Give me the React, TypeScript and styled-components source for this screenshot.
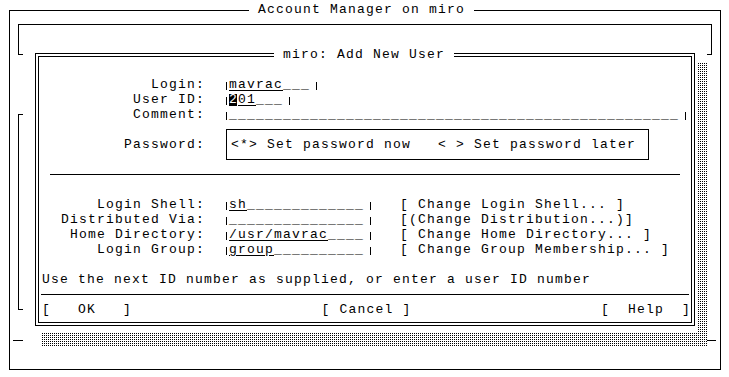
import React, { ReactElement } from "react";
import styled, { createGlobalStyle, css } from "styled-components";

const GlobalStyle = createGlobalStyle`
  html, body {
    margin: 0;
    padding: 0;
    background: #fff;
  }
  body {
    font-family: "Liberation Mono", "DejaVu Sans Mono", monospace;
    font-size: 13px;
    line-height: 15px;
    letter-spacing: 1.2px;
    color: #000;
  }
`;

const shade = css`
  background-color: #fff;
  background-image: linear-gradient(90deg, #fff 1px, transparent 1px),
    linear-gradient(#fff 1px, #000 1px);
  background-size: 2px 2px;
`;

const Screen = styled.div`
  position: relative;
  box-sizing: border-box;
  width: 729px;
  height: 377px;
  padding: 10px 0 0 9px;
  overflow: hidden;
`;

const Window = styled.div`
  box-sizing: border-box;
  width: 712px;
  height: 360px;
  border: 1px solid #000;
`;

const Caption = styled.div<{ $top: number; $left: number }>`
  width: fit-content;
  height: 15px;
  margin: ${p => p.$top}px 0 0 ${p => p.$left}px;
  background: #fff;
  white-space: pre;
`;

const HeaderPanel = styled.div`
  box-sizing: border-box;
  width: 694px;
  height: 31px;
  margin: 7px 0 0 8px;
  border: 1px solid #000;
`;

const ListPanel = styled.div`
  box-sizing: border-box;
  width: 600px;
  height: 196px;
  margin: 59px 0 0 8px;
  border: 1px solid #000;
`;

const StatusRule = styled.div`
  width: 703px;
  height: 1px;
  margin: 30px 0 0 3px;
  background: #000;
`;

const Modal = styled.div`
  position: absolute;
  left: 23px;
  top: 48px;
  box-sizing: border-box;
  width: 684px;
  height: 300px;
  padding: 5px 0 0 12px;
  background: #fff;
  display: grid;
  grid-template-columns: 660px 3px 9px;
  grid-template-rows: 273px 6px 15px;
`;

const Dialog = styled.div`
  grid-column: 1;
  grid-row: 1;
  box-sizing: border-box;
  border: 1px solid #000;
  padding: 2px;
`;

const DialogBody = styled.div`
  box-sizing: border-box;
  height: 100%;
  border: 1px solid #000;
  display: flex;
  flex-direction: column;
`;

const RightShadow = styled.div`
  ${shade}
  grid-column: 3;
  grid-row: 1 / 4;
  margin-top: 9px;
  background-position: 1px 0;
`;

const BottomShadow = styled.div`
  ${shade}
  grid-column: 1 / 3;
  grid-row: 3;
  margin-left: 6px;
`;

const FormBlock = styled.div<{ $top: number }>`
  margin-top: ${p => p.$top}px;
`;

const Row = styled.div`
  display: flex;
  height: 15px;
  white-space: pre;
`;

const Label = styled.span`
  width: 166px;
  flex: none;
  text-align: right;
`;

const FieldCell = styled.span`
  padding-left: 15px;
`;

const Bar = styled.span`
  display: inline-block;
  width: 0;
  height: 8px;
  margin: 0 2px 0 6px;
  border-left: 1px solid #000;
  vertical-align: -2px;
`;

const Value = styled.span`
  text-decoration: underline;
  text-underline-offset: 2px;
`;

const Cursor = styled.span`
  display: inline-block;
  width: 8px;
  height: 12px;
  margin-right: 1px;
  line-height: 12px;
  letter-spacing: 0;
  background: #000;
  color: #fff;
`;

const PasswordRow = styled.div`
  display: flex;
  align-items: center;
  margin-top: 7px;
  white-space: pre;
`;

const PasswordChoice = styled.div`
  box-sizing: border-box;
  width: 423px;
  height: 31px;
  margin-left: 21px;
  padding: 7px 0 0 4px;
  border: 1px solid #000;
`;

const Rule = styled.div<{ $top: number; $left: number; $right: number }>`
  height: 1px;
  flex: none;
  margin: ${p => p.$top}px ${p => p.$right}px 0 ${p => p.$left}px;
  background: #000;
`;

const Message = styled.div`
  margin-top: 15px;
  padding-left: 3px;
  white-space: pre;
`;

const ButtonBar = styled.div`
  display: flex;
  justify-content: space-between;
  margin-top: 7px;
  padding-left: 3px;
  white-space: pre;
`;

type FieldProps = { value: string; size: number; cursor?: boolean };

const Field = ({ value, size, cursor }: FieldProps): ReactElement => (
  <FieldCell>
    <Bar />
    {cursor && <Cursor>{value[0]}</Cursor>}
    <Value>{cursor ? value.slice(1) : value}</Value>
    {"_".repeat(size - value.length)}
    <Bar />
  </FieldCell>
);

const userFields = [
  { label: "Login:", value: "mavrac", size: 9 },
  { label: "User ID:", value: "201", size: 6, cursor: true },
  { label: "Comment:", value: "", size: 50 }
];

const homeFields = [
  { label: "Login Shell:", value: "sh", action: "[ Change Login Shell... ]" },
  { label: "Distributed Via:", value: "", action: "[(Change Distribution...)]" },
  { label: "Home Directory:", value: "/usr/mavrac", action: "[ Change Home Directory... ]" },
  { label: "Login Group:", value: "group", action: "[ Change Group Membership... ]" }
];

const App = (): ReactElement => {
  return (
    <Screen>
      <GlobalStyle />
      <Window>
        <Caption $top={-9} $left={239}>{" Account Manager on miro "}</Caption>
        <HeaderPanel />
        <ListPanel />
        <StatusRule />
      </Window>
      <Modal>
        <Dialog>
          <DialogBody>
            <Caption $top={-10} $left={235}>{" miro: Add New User "}</Caption>
            <FormBlock $top={15}>
              {userFields.map(f => (
                <Row key={f.label}>
                  <Label>{f.label}</Label>
                  <Field value={f.value} size={f.size} cursor={f.cursor} />
                </Row>
              ))}
            </FormBlock>
            <PasswordRow>
              <Label>Password:</Label>
              <PasswordChoice>{"<*> Set password now   < > Set password later"}</PasswordChoice>
            </PasswordRow>
            <Rule $top={14} $left={11} $right={11} />
            <FormBlock $top={22}>
              {homeFields.map(f => (
                <Row key={f.label}>
                  <Label>{f.label}</Label>
                  <Field value={f.value} size={15} />
                  {"   " + f.action}
                </Row>
              ))}
            </FormBlock>
            <Message>Use the next ID number as supplied, or enter a user ID number</Message>
            <Rule $top={7} $left={2} $right={2} />
            <ButtonBar>
              <span>{"[   OK   ]"}</span>
              <span>{"[ Cancel ]"}</span>
              <span>{"[  Help  ]"}</span>
            </ButtonBar>
          </DialogBody>
        </Dialog>
        <RightShadow />
        <BottomShadow />
      </Modal>
    </Screen>
  );
};

export default App;
